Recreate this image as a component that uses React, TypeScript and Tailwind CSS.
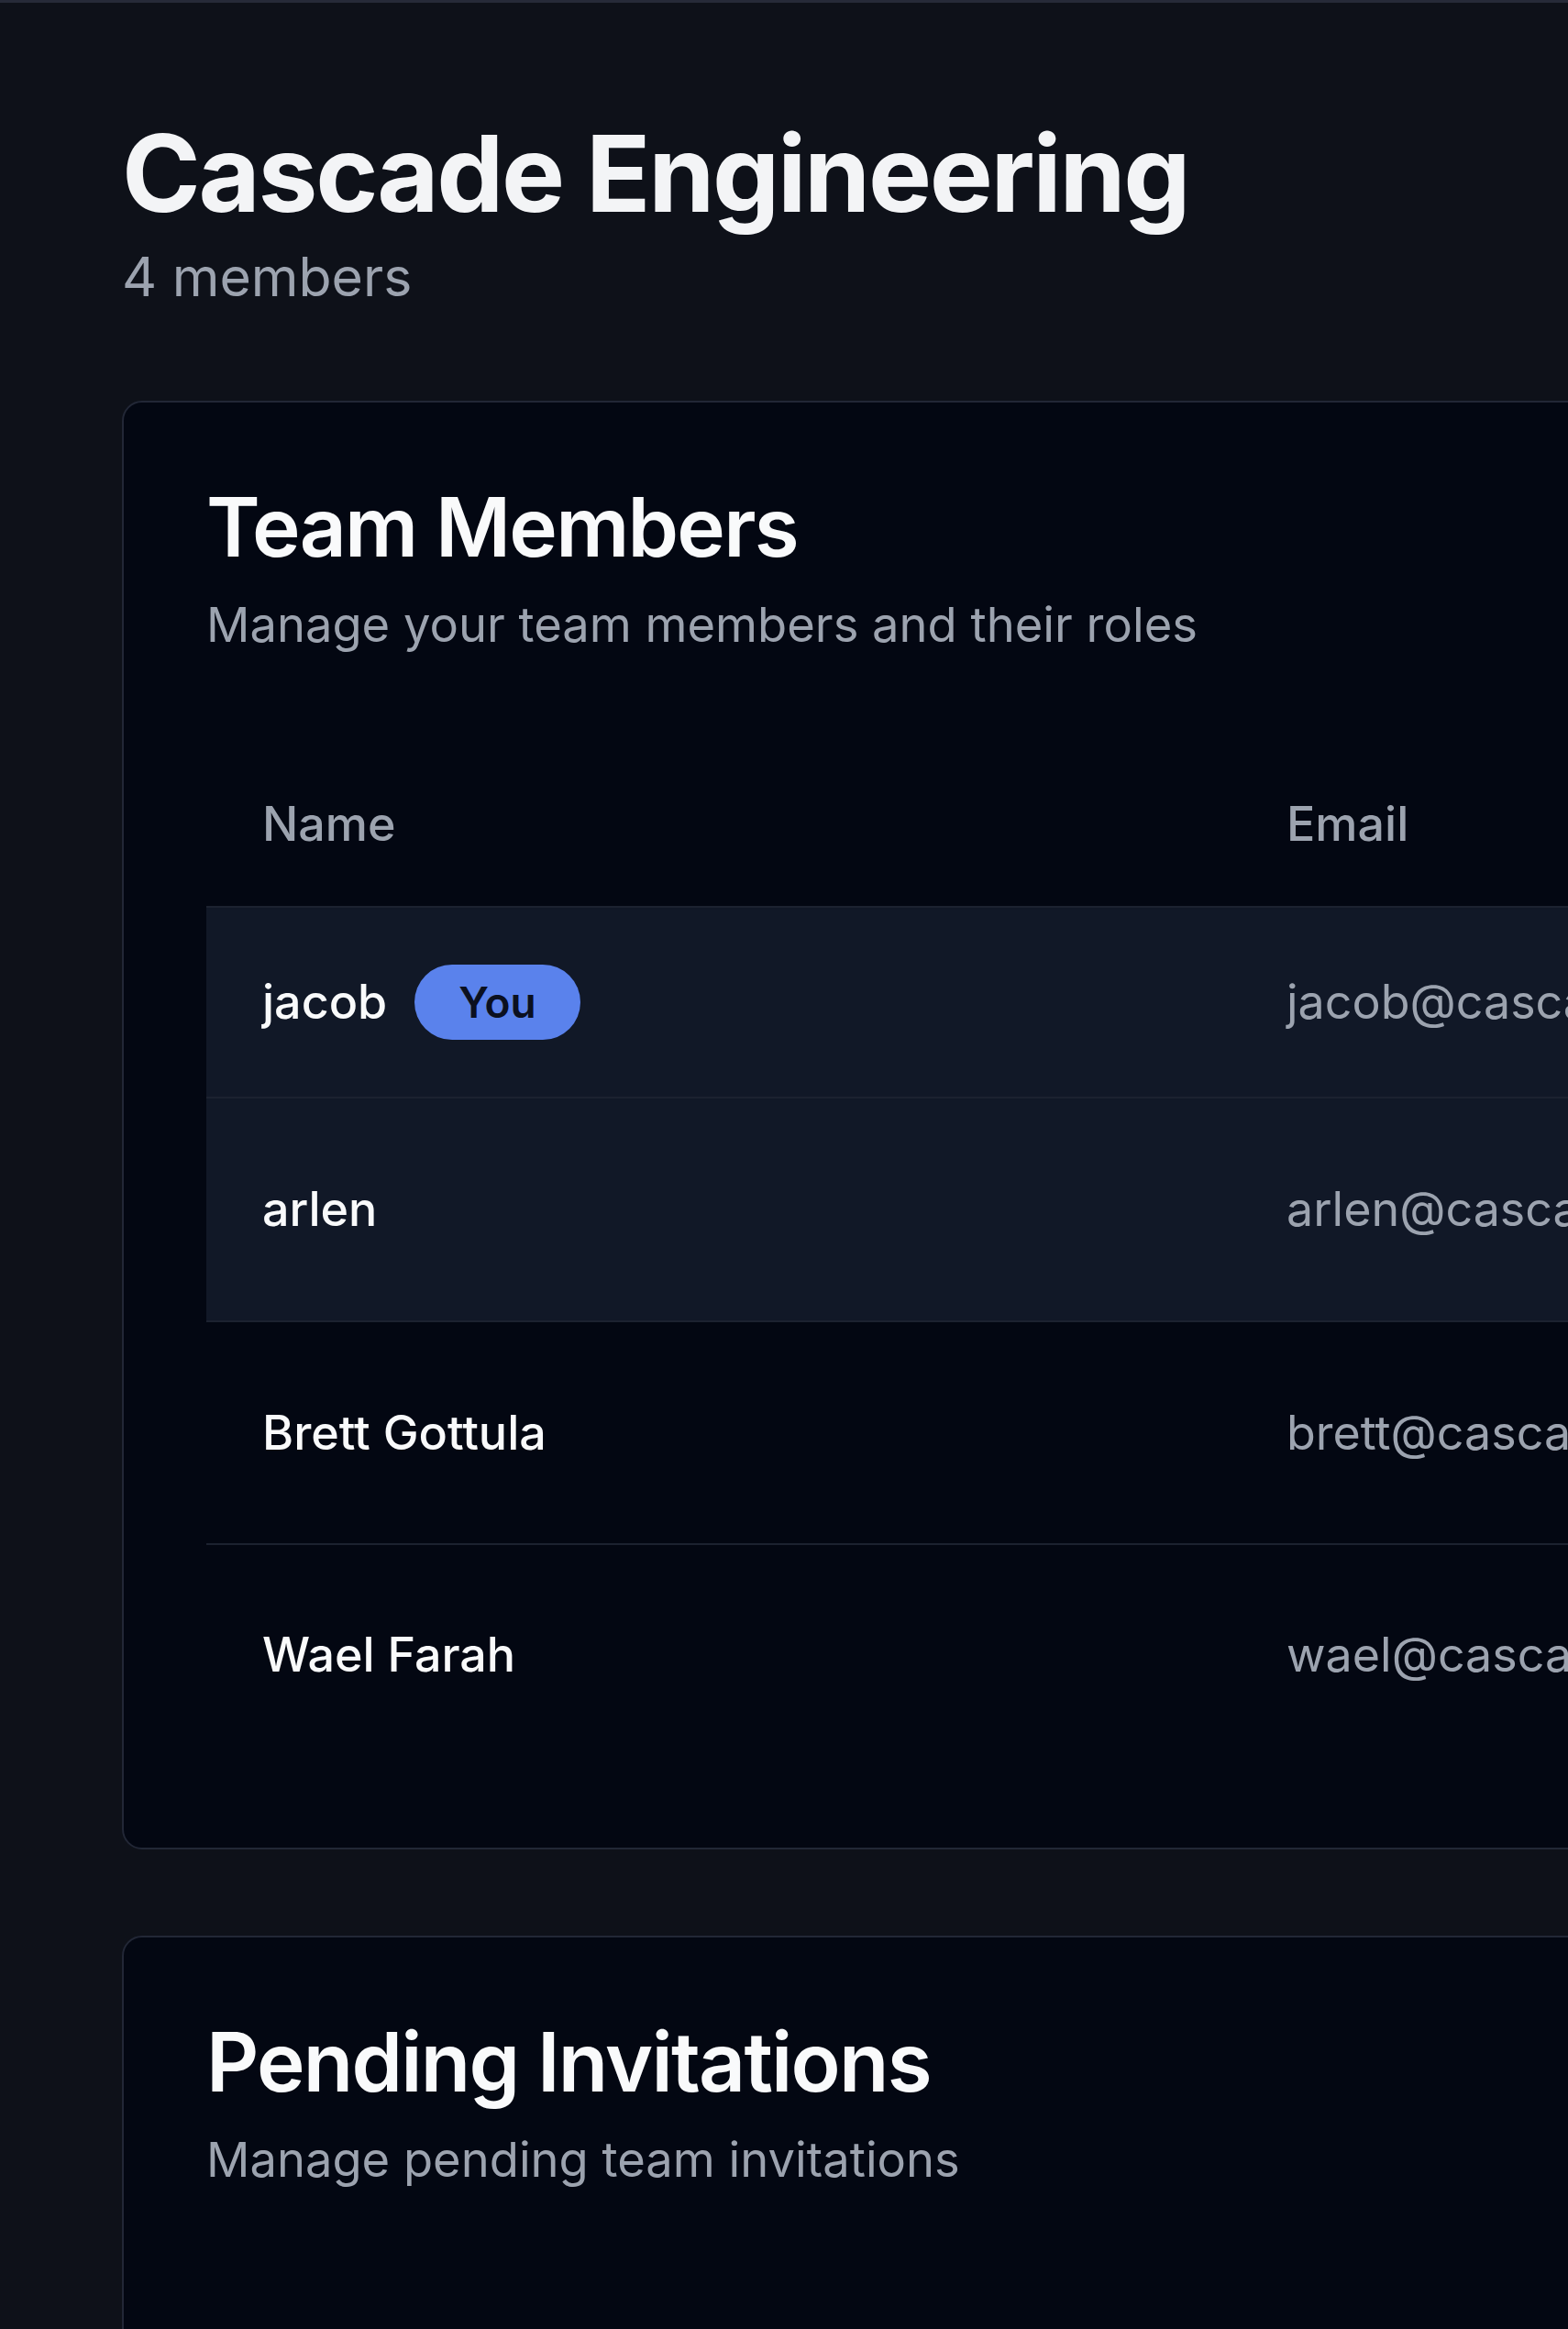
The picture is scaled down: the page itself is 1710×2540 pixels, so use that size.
const members = [
    { name: 'jacob', email: 'jacob@cascade.engineering', you: true, highlight: true, h: 'h-[208px]' },
    { name: 'arlen', email: 'arlen@cascade.engineering', you: false, highlight: true, h: 'h-[244px]' },
    { name: 'Brett Gottula', email: 'brett@cascade.engineering', you: false, highlight: false, h: 'h-[243px]' },
    { name: 'Wael Farah', email: 'wael@cascade.engineering', you: false, highlight: false, h: 'h-[242px]' },
];

function CardHeader({ title, subtitle }: { title: string; subtitle: string }) {
    return (
        <div>
            <h2 className="text-[89px] leading-[92px] font-semibold tracking-[-0.02em] text-[#f9fafb]">{title}</h2>
            <p className="mt-[23px] text-[52.5px] leading-[75px] text-[#9ca3af]">{subtitle}</p>
        </div>
    );
}

export default function App() {
    return (
        <div
            className="w-[1710px] h-[2540px] overflow-hidden bg-[#0e1119]"
            style={{ fontFamily: 'Inter, "Noto Sans", sans-serif' }}
        >
            <div className="h-[3px] bg-[#262a38]" />

            <main className="pl-[133px] pt-[117px]">
                <h1 className="text-[116px] leading-[139px] font-bold tracking-[-0.02em] text-[#f3f4f6]">
                    Cascade Engineering
                </h1>
                <p className="mt-[5px] text-[59px] leading-[75px] text-[#9ca3af]">4 members</p>

                {/* Team members card */}
                <section className="mt-[98px] w-[2200px] rounded-[22px] border-2 border-[#222736] bg-[#030712] p-[90px]">
                    <CardHeader title="Team Members" subtitle="Manage your team members and their roles" />

                    <div className="mt-[91px]">
                        <div className="flex h-[178px] items-center text-[52px] font-medium text-[#9ca3af]">
                            <div className="w-[1178px] pl-[61px]">Name</div>
                            <div>Email</div>
                        </div>
                        {members.map((m) => (
                            <div
                                key={m.email}
                                className={`flex items-center border-t-2 border-[#1c2230] ${m.h} ${m.highlight ? 'bg-[#111827]' : ''}`}
                            >
                                <div className="flex w-[1178px] items-center pl-[61px]">
                                    <span className="text-[52px] font-medium text-[#f9fafb]">{m.name}</span>
                                    {m.you && (
                                        <span className="ml-[30px] flex h-[82px] items-center rounded-full bg-[#5a82ec] px-[48px] text-[46px] font-semibold text-[#0b1020]">
                                            You
                                        </span>
                                    )}
                                </div>
                                <div className="whitespace-nowrap text-[52px] text-[#9ca3af]">{m.email}</div>
                            </div>
                        ))}
                    </div>
                </section>

                {/* Pending invitations card */}
                <section className="mt-[94px] h-[900px] w-[2200px] rounded-[22px] border-2 border-[#222736] bg-[#030712] p-[90px]">
                    <CardHeader title="Pending Invitations" subtitle="Manage pending team invitations" />
                </section>
            </main>
        </div>
    );
}
